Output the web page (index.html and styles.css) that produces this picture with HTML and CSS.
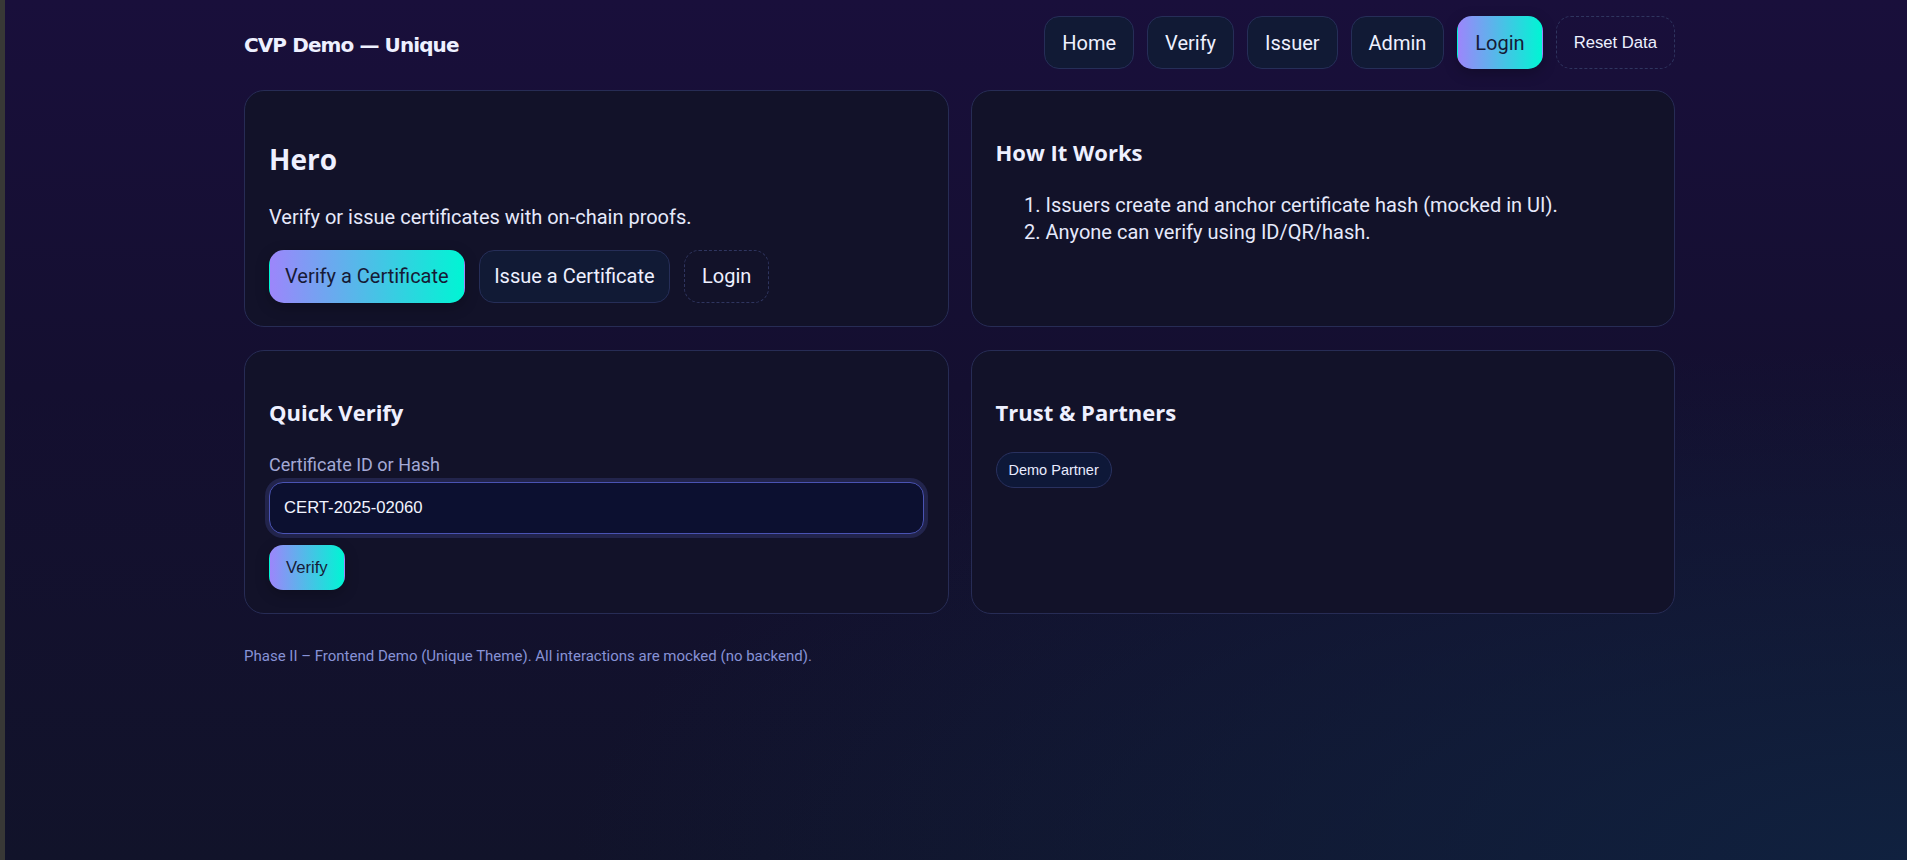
FILE: index.html
```html
<!DOCTYPE html>
<html lang="en">
<head>
<meta charset="utf-8">
<title>CVP Demo — Unique</title>
<link rel="stylesheet" href="styles.css">
</head>
<body>
<div class="page">
  <header class="topbar">
    <div class="brand">CVP Demo — Unique</div>
    <nav class="nav">
      <button class="btn btn-ghost">Home</button>
      <button class="btn btn-ghost">Verify</button>
      <button class="btn btn-ghost">Issuer</button>
      <button class="btn btn-ghost">Admin</button>
      <button class="btn btn-primary">Login</button>
      <button class="btn-reset">Reset Data</button>
    </nav>
  </header>

  <main class="grid">
    <section class="card hero">
      <h2 class="hero-title">Hero</h2>
      <p class="hero-text">Verify or issue certificates with on-chain proofs.</p>
      <div class="actions">
        <button class="btn btn-primary btn-cta">Verify a Certificate</button>
        <button class="btn btn-ghost btn-cta-alt">Issue a Certificate</button>
        <button class="btn btn-dashed">Login</button>
      </div>
    </section>

    <section class="card">
      <h3 class="card-title">How It Works</h3>
      <ol class="steps">
        <li>Issuers create and anchor certificate hash (mocked in UI).</li>
        <li>Anyone can verify using ID/QR/hash.</li>
      </ol>
    </section>

    <section class="card">
      <h3 class="card-title">Quick Verify</h3>
      <label class="field-label" for="cert">Certificate ID or Hash</label>
      <input class="field-input" id="cert" type="text" value="CERT-2025-02060">
      <button class="btn-small">Verify</button>
    </section>

    <section class="card">
      <h3 class="card-title">Trust &amp; Partners</h3>
      <div class="partners">
        <span class="pill">Demo Partner</span>
      </div>
    </section>
  </main>

  <footer class="foot">Phase II – Frontend Demo (Unique Theme). All interactions are mocked (no backend).</footer>
</div>
</body>
</html>
```

FILE: styles.css
```css
* { box-sizing: border-box; }

html, body { height: 100%; }

body {
  margin: 0;
  min-height: 860px;
  border-left: 5px solid #383836;
  font-family: "Roboto", "Noto Sans", sans-serif;
  color: #e8ebff;
  background:
    radial-gradient(ellipse 70% 60% at 100% 100%, #10213f 0%, rgba(16, 33, 63, 0) 100%),
    linear-gradient(180deg, #190f3b 0%, #140f30 45%, #11132a 100%);
}

.page {
  width: 1431px;
  margin-left: 239px;
}

/* header */
.topbar {
  display: flex;
  justify-content: space-between;
  align-items: flex-start;
  padding-top: 16px;
  margin-bottom: 21px;
}

.brand {
  margin-top: 18px;
  font-family: "DejaVu Sans", sans-serif;
  font-weight: 700;
  font-size: 20px;
  letter-spacing: -0.9px;
  line-height: 1.164;
  color: #eef0ff;
}

.nav {
  display: flex;
  gap: 13px;
}

.btn {
  font-family: "Roboto", "Noto Sans", sans-serif;
  font-size: 20px;
  line-height: 24px;
  padding: 13.5px 17px;
  border-radius: 15px;
  border: 1px solid #262e58;
  color: #eef0ff;
  cursor: pointer;
}

.btn-cta {
  padding-left: 15px;
  padding-right: 15px;
}

.btn-cta-alt {
  padding-left: 14px;
  padding-right: 14px;
}

.btn-ghost {
  background: #111a35;
}

.btn-primary {
  border-color: transparent;
  color: #161a36;
  background: linear-gradient(90deg, #9c86fb 0%, #00f5d4 100%);
  box-shadow: 0 4px 14px rgba(0, 0, 0, 0.25);
}

.btn-dashed {
  background: transparent;
  border: 1px dashed #2f355f;
}

.btn-reset {
  font-family: "Liberation Sans", Arial, sans-serif;
  font-size: 16.67px;
  line-height: 19px;
  padding: 16px 17px;
  border-radius: 15px;
  border: 1px dashed #2f355f;
  background: transparent;
  color: #eef0ff;
}

/* grid */
.grid {
  display: grid;
  grid-template-columns: 1fr 1fr;
  column-gap: 22px;
  row-gap: 23px;
}

.card {
  background: #121229;
  border: 1px solid #272c55;
  border-radius: 20px;
  padding: 24px 24px 23px;
  display: flex;
  flex-direction: column;
  align-items: flex-start;
}

.hero-title {
  margin: 25.7px 0 0;
  font-family: "Open Sans", "Noto Sans", sans-serif;
  font-size: 28px;
  line-height: 36px;
  font-weight: 700;
  color: #eef0ff;
}

.hero-text {
  margin: 27.3px 0 0;
  font-size: 20px;
  line-height: 27px;
  color: #e6e9fb;
}

.actions {
  display: flex;
  gap: 14.5px;
  margin-top: 19px;
}

.card-title {
  margin: 22.3px 0 0;
  font-family: "Open Sans", "Noto Sans", sans-serif;
  font-size: 22px;
  line-height: 30px;
  font-weight: 700;
  color: #eef0ff;
}

.steps {
  margin: 25.2px 0 0;
  padding-left: 50px;
  font-size: 20px;
  line-height: 27px;
  color: #e6e9fb;
}

.field-label {
  margin-top: 25.5px;
  font-size: 18px;
  line-height: 24px;
  color: #a3a9d6;
}

.field-input {
  margin-top: 5px;
  width: 100%;
  height: 52px;
  padding: 0 14px;
  font-family: "Liberation Sans", Arial, sans-serif;
  font-size: 16.67px;
  color: #f2f4ff;
  background: #0c1030;
  border: 1.5px solid #4a53b3;
  border-radius: 14px;
  outline: none;
  box-shadow: 0 0 0 4px rgba(74, 83, 170, 0.28);
}

.btn-small {
  margin-top: 11px;
  font-family: "Liberation Sans", Arial, sans-serif;
  font-size: 16.67px;
  line-height: 19px;
  padding: 12px 16px;
  border-radius: 14px;
  border: 1px solid transparent;
  color: #161a36;
  background: linear-gradient(90deg, #9c86fb 0%, #00f5d4 100%);
  box-shadow: 0 4px 14px rgba(0, 0, 0, 0.25);
}

.partners {
  margin-top: 24.7px;
  display: flex;
  gap: 10px;
}

.pill {
  font-family: "Liberation Sans", Arial, sans-serif;
  font-size: 14.5px;
  line-height: 18px;
  padding: 8px 12px;
  border-radius: 999px;
  background: #0e1838;
  border: 1px solid #29315f;
  color: #e8ebff;
}

.foot {
  margin-top: 31.5px;
  font-size: 15px;
  line-height: 22px;
  color: #8792d6;
}
```
